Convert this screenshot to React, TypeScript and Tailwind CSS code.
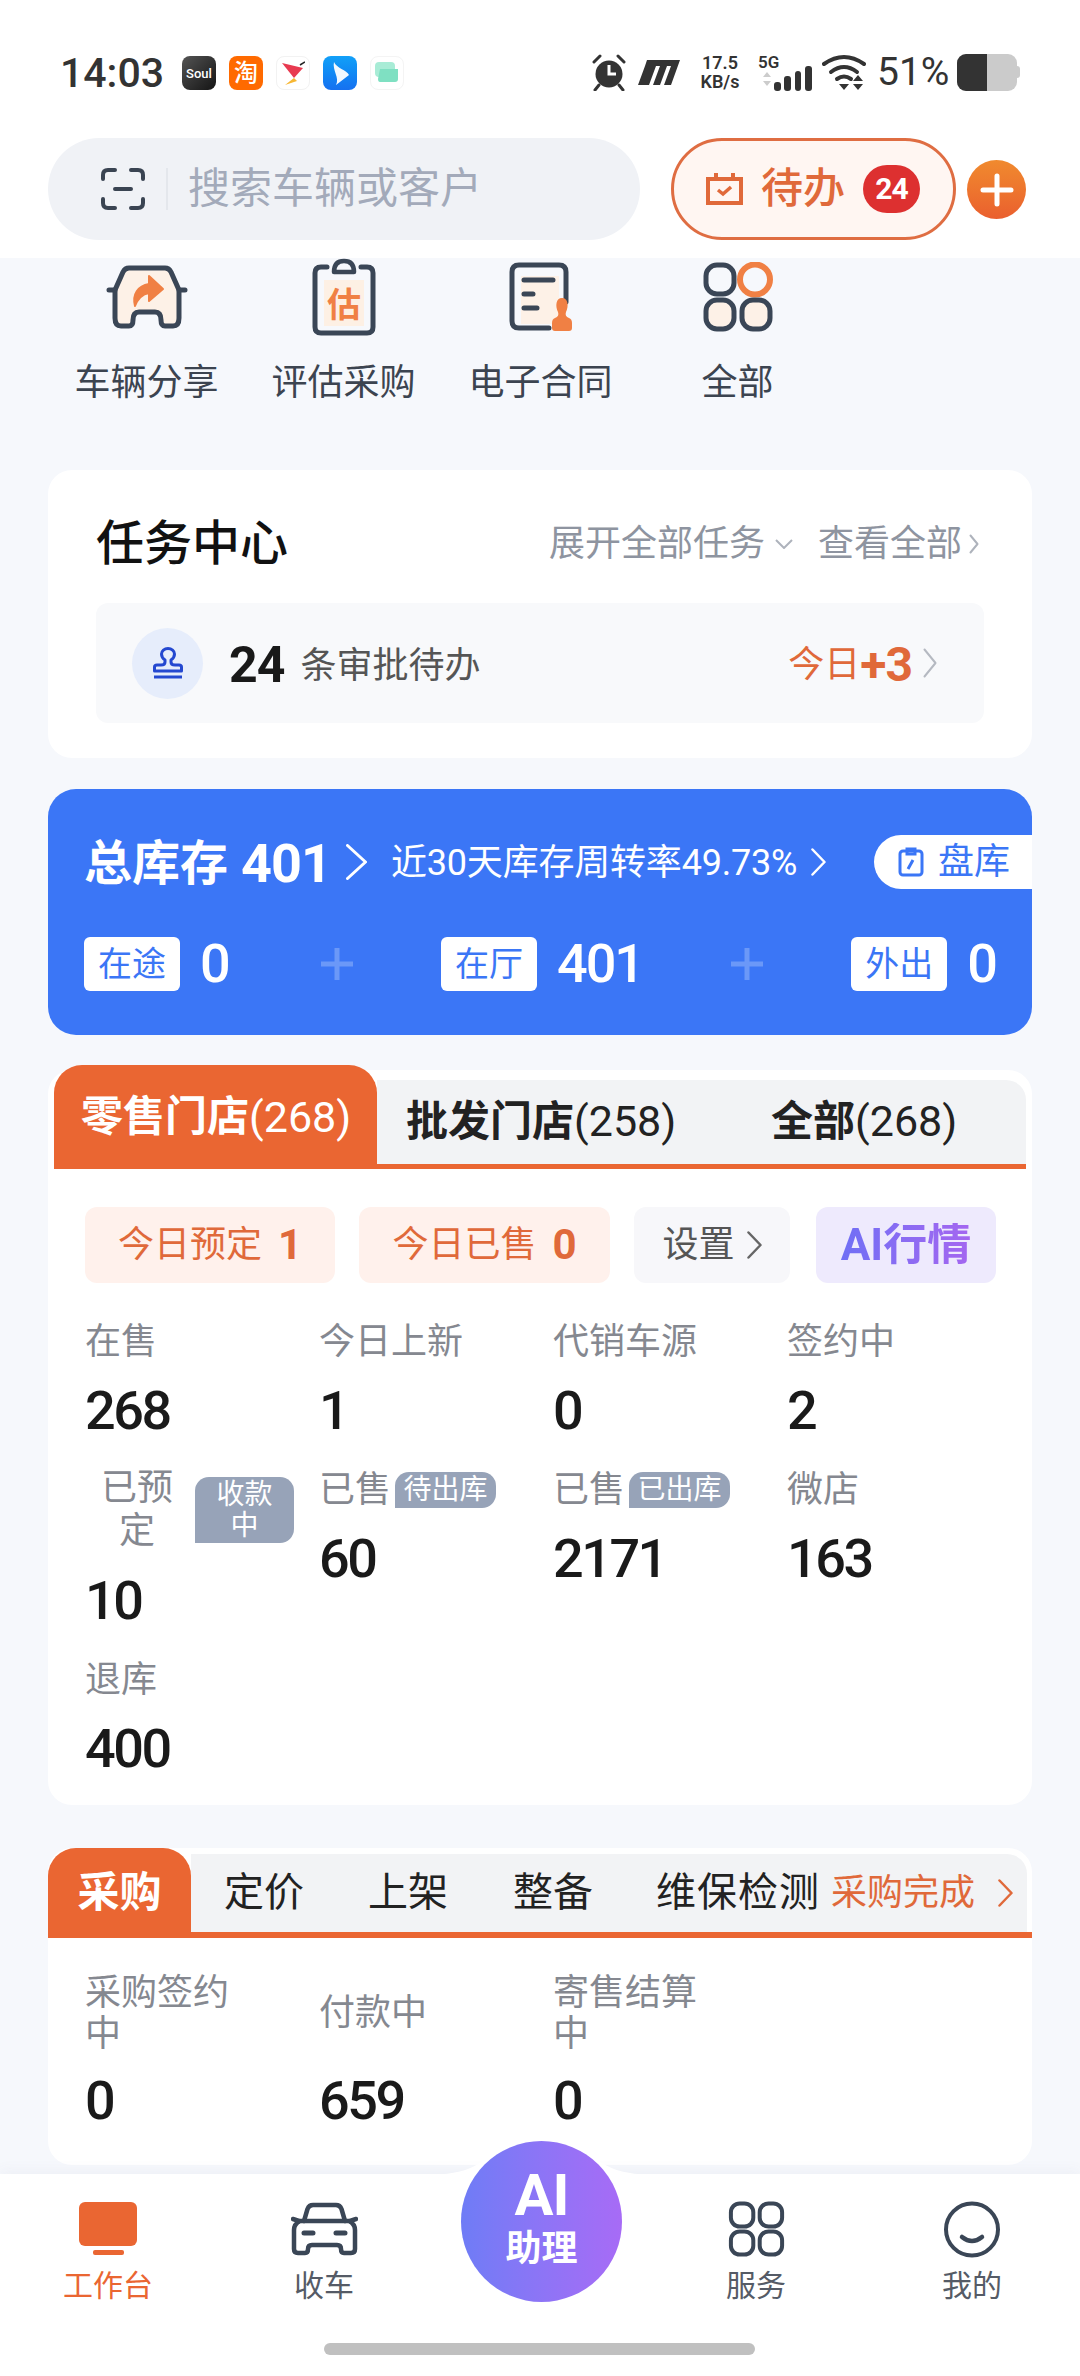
import type { ReactNode } from 'react';

const INK = '#3a4656';
const ORANGE = '#ea6632';

const Chevron = ({ w, h, color, sw = 2 }: { w: number; h: number; color: string; sw?: number }) => (
  <svg width={w} height={h} viewBox={`0 0 ${w} ${h}`} fill="none" className="shrink-0">
    <path d={`M1.5 1.5 L${w - 1.5} ${h / 2} L1.5 ${h - 1.5}`} stroke={color} strokeWidth={sw} strokeLinecap="round" strokeLinejoin="round" />
  </svg>
);

const StatusBar = () => (
  <div className="h-[138px] pt-[54px] pl-[60px] pr-[60px] flex items-start justify-between text-[#333]">
    <div className="flex items-center h-[38px]">
      <span className="text-[41px] leading-none font-medium w-[122px]">14:03</span>
      <div className="flex items-center gap-[13px]">
        <div className="w-[34px] h-[34px] rounded-[8px] bg-gradient-to-br from-[#555] to-[#151515] flex items-center justify-center text-white text-[13px] font-medium leading-none">Soul</div>
        <div className="w-[34px] h-[34px] rounded-[8px] bg-[#ff6a00] flex items-center justify-center text-white text-[24px] leading-none font-medium">淘</div>
        <div className="w-[34px] h-[34px] rounded-[8px] bg-white border border-[#f2f2f2] flex items-center justify-center">
          <svg width="24" height="26" viewBox="0 0 24 26"><path d="M1 3 L22 8 L13 18 Z" fill="#e83a50" /><path d="M13 18 L4 25 L16 21Z" fill="#f7b733" /><path d="M19 5 L24 2" stroke="#222" strokeWidth="1.5" /></svg>
        </div>
        <div className="w-[34px] h-[34px] rounded-[8px] bg-gradient-to-b from-[#12a0f8] to-[#1670f0] flex items-center justify-center">
          <svg width="20" height="26" viewBox="0 0 20 26"><path d="M4 2 C6 8 17 10 19 15 L6 25 C10 18 2 10 4 2Z" fill="#fff" opacity="0.95" /></svg>
        </div>
        <div className="w-[34px] h-[34px] rounded-[8px] bg-white border border-[#f4f4f4] flex items-center justify-center">
          <svg width="26" height="24" viewBox="0 0 26 24"><rect x="1" y="1" width="20" height="15" rx="4" fill="#a8ecd6" /><path d="M6 8 h18 v10 q0 3 -3 3 h-15 q-2 0 -2 -3Z" fill="#7fe0c2" /></svg>
        </div>
      </div>
    </div>
    <div className="flex items-center h-[38px] -mt-[1px]">
      <svg width="36" height="37" viewBox="0 0 36 37" className="mr-[11px]">
        <circle cx="18" cy="20" r="13.5" fill="#333" />
        <path d="M18 11 V20 H25" stroke="#fff" strokeWidth="3" fill="none" />
        <path d="M3 8 L9 2 M33 8 L27 2 M8 31 L4 36 M28 31 L32 36" stroke="#333" strokeWidth="3" strokeLinecap="round" />
      </svg>
      <svg width="42" height="25" viewBox="0 0 42 25" className="mr-[18px]" fill="#333">
        <path d="M9 0 H42 L33 25 H26 L33 6 H29 L22 25 H15 L22 6 H18 L11 25 H0 L7 6 H7Z" />
      </svg>
      <div className="flex flex-col items-center w-[44px] text-[18px] leading-[19px] font-semibold mr-[16px]">
        <span>17.5</span>
        <span>KB/s</span>
      </div>
      <div className="relative w-[54px] h-[37px] mr-[10px]">
        <span className="absolute left-0 top-0 text-[17px] leading-[17px] font-semibold">5G</span>
        <svg width="54" height="37" viewBox="0 0 54 37" className="absolute inset-0">
          <path d="M5 23 L9 18 L13 23Z M5 27 L9 32 L13 27Z" fill="#ccc" />
          <rect x="16" y="28" width="7" height="9" rx="3" fill="#333" />
          <rect x="26" y="22" width="7" height="15" rx="3" fill="#333" />
          <rect x="37" y="17" width="6" height="20" rx="3" fill="#333" />
          <rect x="47" y="12" width="7" height="25" rx="3" fill="#333" />
        </svg>
      </div>
      <svg width="46" height="37" viewBox="0 0 46 37" fill="none" className="mr-[9px]">
        <path d="M2 10 Q22 -4 42 10" stroke="#333" strokeWidth="4" strokeLinecap="round" />
        <path d="M9 18 Q22 8 35 18" stroke="#333" strokeWidth="4" strokeLinecap="round" />
        <path d="M15 25 Q22 20 29 25" stroke="#333" strokeWidth="4" strokeLinecap="round" />
        <path d="M17 30 H27 L22 36Z M31 27 L36 21 L41 27Z M31 30 H41 L36 36Z" fill="#333" />
      </svg>
      <span className="text-[39px] leading-none w-[80px]">51%</span>
      <div className="flex items-center">
        <div className="w-[60px] h-[37px] rounded-[9px] overflow-hidden flex bg-[#cbcbcb]">
          <div className="w-[30px] bg-[#333]" />
        </div>
        <div className="w-[3px] h-[12px] rounded-r-full bg-[#cbcbcb]" />
      </div>
    </div>
  </div>
);

const SearchRow = () => (
  <div className="h-[120px] pl-[48px] flex items-start">
    <div className="w-[592px] h-[102px] rounded-full bg-[#f0f2f6] flex items-center pl-[53px]">
      <svg width="44" height="42" viewBox="0 0 44 42" fill="none" stroke="#3a4452" strokeWidth="4" strokeLinecap="round">
        <path d="M14 2 H7 Q2 2 2 7 V11 M30 2 H37 Q42 2 42 7 V11 M14 40 H7 Q2 40 2 35 V31 M30 40 H37 Q42 40 42 35 V31 M14 21 H30" />
      </svg>
      <div className="w-[2px] h-[42px] bg-[#e4e7ec] ml-[21px] mr-[20px]" />
      <span className="text-[42px] leading-none text-[#a3aaba]">搜索车辆或客户</span>
    </div>
    <div className="ml-[31px] w-[285px] h-[102px] rounded-full border-[3px] border-[#df6d42] bg-[#fff6f2] flex items-center pl-[32px]">
      <svg width="37" height="32" viewBox="0 0 37 32" fill="none">
        <path d="M2 6 H35 V30 H2Z" stroke="#e0693a" strokeWidth="4" />
        <path d="M10 0 V6 M27 0 V6" stroke="#e0693a" strokeWidth="4" />
        <path d="M12 17 L17 21 L25 14" stroke="#e0693a" strokeWidth="3.5" />
      </svg>
      <span className="ml-[18px] text-[42px] leading-none font-medium text-[#e0693a]">待办</span>
      <span className="ml-[18px] w-[57px] h-[48px] rounded-full bg-[#dd3030] text-white text-[30px] font-bold leading-none tracking-[-1px] flex items-center justify-center">24</span>
    </div>
    <div className="ml-[11px] mt-[22px] w-[59px] h-[59px] rounded-full bg-gradient-to-b from-[#f08a2e] to-[#ea5f2e] flex items-center justify-center">
      <svg width="34" height="34" viewBox="0 0 34 34"><path d="M17 3 V31 M3 17 H31" stroke="#fff" strokeWidth="5" strokeLinecap="round" /></svg>
    </div>
  </div>
);

const CarShareIcon = () => (
  <svg width="84" height="66" viewBox="0 0 84 66" fill="none">
    <path d="M24 4 H60 Q64 4 66 8 L74 26 V54 Q74 62 68 62 H60 Q56 62 56 56 Q56 48 50 48 H34 Q28 48 28 56 Q28 62 24 62 H16 Q10 62 10 54 V26 L18 8 Q20 4 24 4Z" fill="#fdf1e7" stroke={INK} strokeWidth="5" strokeLinejoin="round" />
    <path d="M10 26 H4 M74 26 H80" stroke={INK} strokeWidth="5" strokeLinecap="round" />
    <path d="M30 42 C27 30 33 22 44 20 V12 L58 25 L44 37 V29 C38 30 33 34 30 42Z" fill="#f08044" stroke="#f08044" strokeWidth="2" strokeLinejoin="round" />
  </svg>
);

const ClipboardIcon = () => (
  <svg width="64" height="78" viewBox="0 0 64 78" fill="none">
    <rect x="12" y="22" width="40" height="46" fill="#fdf0e4" />
    <path d="M15 9 H9 Q3 9 3 15 V69 Q3 75 9 75 H55 Q61 75 61 69 V15 Q61 9 55 9 H49" stroke={INK} strokeWidth="5" strokeLinecap="round" />
    <path d="M22 14 Q22 3 32 3 Q42 3 42 14Z" stroke={INK} strokeWidth="4.5" strokeLinejoin="round" />
    <text x="32" y="59" textAnchor="middle" fontSize="34" fontWeight="700" fill="#f08044">估</text>
  </svg>
);

const ContractIcon = () => (
  <svg width="64" height="70" viewBox="0 0 64 70" fill="none">
    <rect x="12" y="14" width="38" height="48" fill="#fdf1e7" />
    <path d="M40 66 H10 Q3 66 3 59 V10 Q3 3 10 3 H50 Q57 3 57 10 V40" stroke={INK} strokeWidth="5" strokeLinecap="round" />
    <path d="M15 18 H44 M15 32 H24 M15 46 H28" stroke={INK} strokeWidth="5" strokeLinecap="round" />
    <path d="M53 36 C59 36 60 44 57 50 C56 53 57 55 60 56 Q63 57 63 61 V66 Q63 69 60 69 H46 Q43 69 43 66 V61 Q43 57 46 56 C49 55 50 53 49 50 C46 44 47 36 53 36Z" fill="#f08044" />
  </svg>
);

const GridIcon = ({ w, h, accent }: { w: number; h: number; accent?: boolean }) => (
  <svg width={w} height={h} viewBox="0 0 70 70" fill="none" stroke={INK} strokeWidth="5">
    <rect x="3" y="3" width="28" height="29" rx="11" />
    {accent ? <ellipse cx="52" cy="17.5" rx="15" ry="15" stroke="#f08044" strokeWidth="6" /> : <rect x="39" y="3" width="28" height="29" rx="11" />}
    <rect x="3" y="38" width="28" height="29" rx="11" fill={accent ? '#fdf1e7' : 'none'} />
    <rect x="39" y="38" width="28" height="29" rx="11" fill={accent ? '#fdf1e7' : 'none'} />
  </svg>
);

const QuickItem = ({ icon, label }: { icon: ReactNode; label: string }) => (
  <div className="flex flex-col items-center">
    <div className="h-[109px] pb-[32px] flex items-center justify-center">{icon}</div>
    <span className="text-[36px] leading-[32px] text-[#3c4450]">{label}</span>
  </div>
);

const TaskCard = () => (
  <div className="mx-[48px] h-[288px] rounded-[24px] bg-white px-[48px] pt-[50px]">
    <div className="flex items-center h-[48px]">
      <span className="text-[48px] leading-none font-medium text-[#111]">任务中心</span>
      <span className="ml-auto text-[36px] leading-none text-[#8e94a0]">展开全部任务</span>
      <svg width="18" height="10" viewBox="0 0 18 10" fill="none" className="ml-[10px]"><path d="M1 1 L9 9 L17 1" stroke="#aeb3bc" strokeWidth="2" /></svg>
      <span className="ml-[25px] text-[36px] leading-none text-[#8e94a0]">查看全部</span>
      <div className="ml-[7px] mr-[5px]"><Chevron w={10} h={20} color="#aeb3bc" /></div>
    </div>
    <div className="mt-[35px] h-[120px] rounded-[12px] bg-[#f8f9fb] flex items-center pl-[36px] pr-[47px]">
      <div className="w-[71px] h-[71px] rounded-full bg-[#e6edfb] flex items-center justify-center">
        <svg width="30" height="32" viewBox="0 0 30 32" fill="none" stroke="#2448d0" strokeWidth="3">
          <path d="M12 13 C9 11 8.500 9 8.500 7 A6.500 5.500 0 0 1 21.500 7 C21.500 9 21 11 18 13 V15 Q18 18 22 18 H26 Q28.500 18 28.500 20 V24 H1.500 V20 Q1.500 18 4 18 H8 Q12 18 12 15Z" strokeLinejoin="round" />
          <path d="M1 30 H29" />
        </svg>
      </div>
      <span className="ml-[26px] pt-[3px] text-[50px] leading-none font-bold tracking-[-1px] text-[#191919]">24</span>
      <span className="ml-[16px] pt-[5px] text-[36px] leading-none text-[#555]">条审批待办</span>
      <span className="ml-auto pt-[3px] text-[36px] leading-none text-[#e0693a]">今日</span>
      <span className="pt-[3px] text-[48px] leading-none font-bold tracking-[-1px] text-[#e0693a]">+3</span>
      <div className="ml-[11px]"><Chevron w={14} h={30} color="#b5b9c1" /></div>
    </div>
  </div>
);

const StockTag = ({ label, value }: { label: string; value: string }) => (
  <div className="flex items-center">
    <span className="w-[96px] h-[54px] rounded-[6px] bg-white text-[#3b76f6] text-[34px] leading-none flex items-center justify-center">{label}</span>
    <span className="ml-[20px] text-[54px] leading-none font-medium tracking-[-2px] text-white">{value}</span>
  </div>
);

const StockPlus = () => (
  <svg width="32" height="32" viewBox="0 0 32 32"><path d="M16 0 V32 M0 16 H32" stroke="#6b98f8" strokeWidth="5" /></svg>
);

const StockCard = () => (
  <div className="mx-[48px] mt-[31px] h-[246px] rounded-[28px] bg-[#3b76f6] overflow-hidden pt-[46px]">
    <div className="flex items-center h-[54px] pl-[36px] text-white">
      <span className="pt-[3px] text-[48px] leading-none font-bold w-[157px]">总库存</span>
      <span className="pt-[3px] text-[54px] leading-none font-bold tracking-[-1px] w-[105px]">401</span>
      <Chevron w={21} h={36} color="#fff" sw={3} />
      <span className="ml-[24px] w-[408px] pt-[2px] text-[36px] leading-none tracking-[-0.2px] whitespace-nowrap">近30天库存周转率49.73%</span>
      <div className="ml-[12px]"><Chevron w={15} h={28} color="#fff" sw={2.5} /></div>
      <div className="ml-auto w-[158px] h-[54px] rounded-l-full bg-white flex items-center pl-[24px] text-[#3b76f6]">
        <svg width="26" height="30" viewBox="0 0 26 30" fill="none" stroke="#3b76f6" strokeWidth="3">
          <rect x="2" y="4" width="22" height="24" rx="3" />
          <path d="M9 2 H17 V7 H9Z M15 13 L10 22" />
        </svg>
        <span className="ml-[14px] text-[36px] leading-none">盘库</span>
      </div>
    </div>
    <div className="mt-[48px] pl-[36px] pr-[36px] flex items-center justify-between">
      <StockTag label="在途" value="0" />
      <div className="ml-[8px]"><StockPlus /></div>
      <div className="ml-[4px]"><StockTag label="在厅" value="401" /></div>
      <div className="ml-[4px]"><StockPlus /></div>
      <div className="ml-[4px]"><StockTag label="外出" value="0" /></div>
    </div>
  </div>
);

const StoreTab = ({ name, count, className }: { name: string; count: string; className: string }) => (
  <span className={`whitespace-nowrap text-[#222] ${className}`}>
    <span className="text-[42px] font-bold">{name}</span>
    <span className="text-[43px]">{count}</span>
  </span>
);

const ActionButton = ({ label, value, className }: { label: string; value: string; className: string }) => (
  <div className={`h-[76px] rounded-[12px] bg-[#fff1ec] flex items-center justify-center text-[#e0693a] ${className}`}>
    <span className="text-[36px] leading-none">{label}</span>
    <span className="ml-[16px] text-[42px] leading-none font-bold">{value}</span>
  </div>
);

const Stat = ({ label, value }: { label: ReactNode; value: string }) => (
  <div className="flex flex-col">
    <div className="h-[44px] pt-[3px] flex items-center text-[36px] leading-none text-[#858890] whitespace-nowrap">{label}</div>
    <span className="mt-[18px] h-[60px] pt-[1px] text-[54px] leading-[60px] font-medium tracking-[-2.5px] text-[#1a1a1a]">{value}</span>
  </div>
);

const Pill = ({ children }: { children: ReactNode }) => (
  <span className="ml-[4px] w-[101px] h-[36px] rounded-[14px] rounded-bl-none bg-[#97a3b8] text-white text-[28px] leading-none flex items-center justify-center">{children}</span>
);

const StoreCard = () => (
  <div className="mx-[48px] mt-[35px] h-[735px] rounded-[24px] bg-white relative">
    <div className="absolute left-[6px] right-[6px] -top-[5px] h-[104px] flex items-end">
      <div className="w-[323px] h-[104px] rounded-t-[28px] bg-[#ea6632] text-white flex items-center pl-[27px] whitespace-nowrap">
        <span className="text-[42px] font-bold leading-none">零售门店</span>
        <span className="text-[43px] leading-none">(268)</span>
      </div>
      <div className="flex-1 h-[89px] rounded-tr-[20px] bg-[#f2f3f5] border-b-[5px] border-[#ea6632] flex items-center pl-[29px] pb-[2px]">
        <StoreTab name="批发门店" count="(258)" className="w-[365px]" />
        <StoreTab name="全部" count="(268)" className="" />
      </div>
    </div>
    <div className="pt-[137px] pl-[37px]">
      <div className="flex items-center">
        <ActionButton label="今日预定" value="1" className="w-[250px]" />
        <ActionButton label="今日已售" value="0" className="w-[251px] ml-[24px]" />
        <div className="ml-[24px] w-[156px] h-[76px] rounded-[12px] bg-[#f7f7fa] flex items-center justify-center text-[36px] leading-none text-[#555]">
          <span>设置</span>
          <div className="ml-[12px]"><Chevron w={15} h={28} color="#666" sw={2.5} /></div>
        </div>
        <div className="ml-[26px] w-[180px] h-[76px] rounded-[12px] bg-[#eeeafd] flex items-center justify-center">
          <span className="text-[44px] leading-none font-bold text-transparent bg-clip-text bg-gradient-to-r from-[#6f6ff5] to-[#a466f0]">AI行情</span>
        </div>
      </div>
      <div className="mt-[35px] grid grid-cols-[234px_234px_234px_234px] items-start gap-y-[26px]">
        <Stat label="在售" value="268" />
        <Stat label="今日上新" value="1" />
        <Stat label="代销车源" value="0" />
        <Stat label="签约中" value="2" />
        <div className="flex flex-col">
          <div className="flex items-center h-[86px] pt-[2px] text-[36px] leading-[43px] text-[#858890]">
            <span className="ml-[16px] w-[72px] text-center">已预定</span>
            <span className="ml-[22px] w-[99px] h-[66px] rounded-[14px] rounded-bl-none bg-[#97a3b8] text-white text-[28px] leading-[31px] text-center px-[12px] flex items-center justify-center">收款中</span>
          </div>
          <span className="mt-[18px] h-[60px] pt-[1px] text-[54px] leading-[60px] font-medium tracking-[-2.5px] text-[#1a1a1a]">10</span>
        </div>
        <Stat label={<><span>已售</span><Pill>待出库</Pill></>} value="60" />
        <Stat label={<><span>已售</span><Pill>已出库</Pill></>} value="2171" />
        <Stat label="微店" value="163" />
        <Stat label="退库" value="400" />
      </div>
    </div>
  </div>
);

const PurchaseStat = ({ label, value }: { label: string; value: string }) => (
  <div className="flex flex-col">
    <div className="h-[82px] pt-[3px] w-[160px] flex items-center text-[36px] leading-[41px] text-[#858890]">{label}</div>
    <span className="mt-[17px] h-[60px] pt-[1px] text-[54px] leading-[60px] font-medium tracking-[-2.5px] text-[#1a1a1a]">{value}</span>
  </div>
);

const PurchaseCard = () => (
  <div className="mx-[48px] mt-[43px] h-[317px] rounded-[24px] bg-white">
    <div className="h-[90px] flex items-end">
      <div className="w-[143px] h-[90px] rounded-t-[28px] bg-[#ea6632] text-white text-[42px] leading-none font-bold flex items-center justify-center">采购</div>
      <div className="flex-1 h-[84px] relative">
        <div className="h-[78px] mr-[5px] rounded-tr-[20px] bg-[#f2f3f5] flex items-center pl-[33px] text-[40px] leading-none text-[#222] whitespace-nowrap">
          <span className="w-[144px]">定价</span>
          <span className="w-[145px]">上架</span>
          <span className="w-[143px]">整备</span>
          <span className="w-[175px] tracking-[1px]">维保检测</span>
          <span className="text-[36px] text-[#e0693a]">采购完成</span>
          <div className="ml-[23px]"><Chevron w={15} h={28} color="#e0693a" sw={2.5} /></div>
        </div>
        <div className="h-[6px] bg-[#ea6632]" />
      </div>
    </div>
    <div className="pt-[33px] pl-[37px] grid grid-cols-[234px_234px_234px]">
      <PurchaseStat label="采购签约中" value="0" />
      <PurchaseStat label="付款中" value="659" />
      <PurchaseStat label="寄售结算中" value="0" />
    </div>
  </div>
);

const NavItem = ({ icon, label, active }: { icon: ReactNode; label: string; active?: boolean }) => (
  <div className="flex flex-col items-center">
    <div className="h-[58px] flex items-center justify-center">{icon}</div>
    <span className={`mt-[10px] text-[30px] leading-[36px] ${active ? 'text-[#ea6632]' : 'text-[#555b66]'}`}>{label}</span>
  </div>
);

const BottomNav = () => (
  <nav className="relative h-[202px] bg-white shadow-[0_-4px_12px_rgba(90,100,130,0.05)]">
    {/* hump behind the AI button */}
    <svg width="240" height="52" viewBox="0 0 240 52" className="absolute left-[421px] -top-[51px]">
      <path d="M0 52 C40 52 60 46 80 20 C100 -6 140 -6 160 20 C180 46 200 52 240 52Z" fill="#fff" />
    </svg>
    <div className="absolute left-[461px] -top-[33px] w-[161px] h-[161px] rounded-full bg-gradient-to-r from-[#6e7cf6] to-[#a76bf6] flex flex-col items-center text-white font-bold">
      <span className="mt-[26px] text-[58px] leading-[56px] tracking-[-1px]">AI</span>
      <span className="mt-[6px] text-[36px] leading-[40px]">助理</span>
    </div>
    <div className="pt-[26px] grid grid-cols-5">
      <NavItem
        active
        label="工作台"
        icon={
          <svg width="58" height="54" viewBox="0 0 58 54" fill={ORANGE}>
            <rect x="0" y="0" width="58" height="44" rx="6" />
            <rect x="14" y="48" width="31" height="5" rx="2" />
          </svg>
        }
      />
      <NavItem
        label="收车"
        icon={
          <svg width="67" height="54" viewBox="0 0 67 54" fill="none" stroke={INK} strokeWidth="4.5" strokeLinejoin="round" strokeLinecap="round">
            <path d="M13 19 L16.500 7 Q18 3 22 3 H45 Q49 3 50.500 7 L54 19" />
            <path d="M9 19 Q3 22 3 28 V47 Q3 51 7 51 H14 Q17 51 17 47 Q17 43 21 43 H46 Q50 43 50 47 Q50 51 53 51 H60 Q64 51 64 47 V28 Q64 22 58 19Z" />
            <path d="M2 17 L8 19 M65 17 L59 19" />
            <path d="M13 31 H22 M45 31 H54" strokeWidth="5" />
          </svg>
        }
      />
      <div />
      <NavItem label="服务" icon={<GridIcon w={57} h={56} />} />
      <NavItem
        label="我的"
        icon={
          <svg width="56" height="57" viewBox="0 0 56 57" fill="none" stroke={INK} strokeWidth="4">
            <circle cx="28" cy="28.5" r="26" />
            <path d="M18 36 Q28 44 38 36" strokeLinecap="round" strokeWidth="4.5" />
          </svg>
        }
      />
    </div>
    <div className="absolute left-[324px] top-[169px] w-[431px] h-[12px] rounded-full bg-[#c0c0c0]" />
  </nav>
);

export default function App() {
  return (
    <div className="w-[1080px] h-[2376px] overflow-hidden flex flex-col bg-[#f6f8fc] font-['Roboto','Noto_Sans_CJK_SC',sans-serif]">
      <header className="bg-white shrink-0">
        <StatusBar />
        <SearchRow />
      </header>
      <main className="flex-1 overflow-hidden">
        <div className="mx-[48px] grid grid-cols-[197px_197px_197px_197px]">
          <QuickItem icon={<CarShareIcon />} label="车辆分享" />
          <QuickItem icon={<ClipboardIcon />} label="评估采购" />
          <QuickItem icon={<ContractIcon />} label="电子合同" />
          <QuickItem icon={<GridIcon w={70} h={70} accent />} label="全部" />
        </div>
        <div className="h-[71px]" />
        <TaskCard />
        <StockCard />
        <StoreCard />
        <PurchaseCard />
      </main>
      <BottomNav />
    </div>
  );
}
